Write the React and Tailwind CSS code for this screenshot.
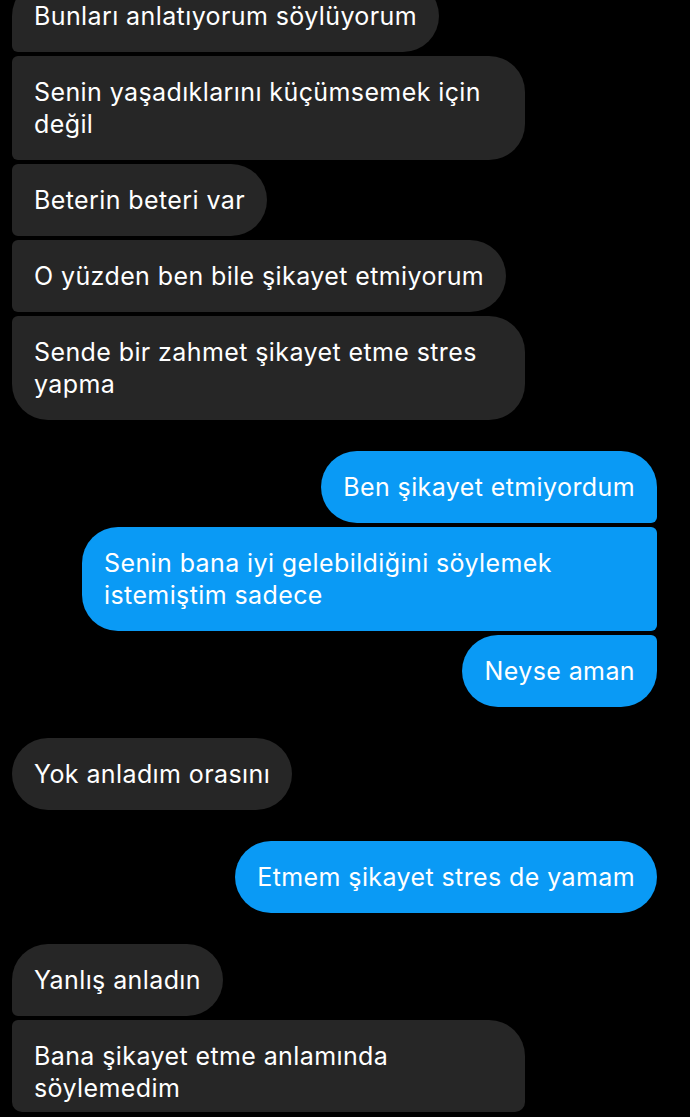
import React from "react";

const groups = [
  {
    side: "in",
    items: [
      { text: "Bunları anlatıyorum söylüyorum" },
      { text: "Senin yaşadıklarını küçümsemek için değil", w: "w-[513px]" },
      { text: "Beterin beteri var" },
      { text: "O yüzden ben bile şikayet etmiyorum" },
      { text: "Sende bir zahmet şikayet etme stres yapma", w: "w-[513px]" },
    ],
  },
  {
    side: "out",
    items: [
      { text: "Ben şikayet etmiyordum" },
      { text: "Senin bana iyi gelebildiğini söylemek istemiştim sadece", w: "w-[575px]" },
      { text: "Neyse aman" },
    ],
  },
  { side: "in", items: [{ text: "Yok anladım orasını" }] },
  { side: "out", items: [{ text: "Etmem şikayet stres de yamam" }] },
  {
    side: "in",
    items: [
      { text: "Yanlış anladın" },
      { text: "Bana şikayet etme anlamında söylemedim", w: "w-[513px]", last: true },
    ],
  },
];

// corner classes, written out in full so tailwind picks them up
const inCorners = {
  single: "rounded-tl-[36px] rounded-bl-[36px]",
  first: "rounded-tl-[36px] rounded-bl-[6px]",
  middle: "rounded-tl-[6px] rounded-bl-[6px]",
  last: "rounded-tl-[6px] rounded-bl-[36px]",
};
const outCorners = {
  single: "rounded-tr-[36px] rounded-br-[36px]",
  first: "rounded-tr-[36px] rounded-br-[6px]",
  middle: "rounded-tr-[6px] rounded-br-[6px]",
  last: "rounded-tr-[6px] rounded-br-[36px]",
};

function position(i, n) {
  if (n === 1) return "single";
  if (i === 0) return "first";
  if (i === n - 1) return "last";
  return "middle";
}

const Bubble = ({ side, text, w, pos, cut }) => {
  const isIn = side === "in";
  const corners = isIn
    ? `${inCorners[pos]} rounded-tr-[36px] rounded-br-[36px]`
    : `${outCorners[pos]} rounded-tl-[36px] rounded-bl-[36px]`;
  return (
    <div
      className={`${w || ""} ${corners} ${
        isIn ? "self-start bg-[#262626]" : "self-end bg-[#0a9af5]"
      } ${cut ? "h-[92px] overflow-hidden !rounded-bl-[10px] !rounded-br-[10px]" : ""} px-[22px] py-[20px] text-[25px] leading-[32px] tracking-[0.4px] text-white`}
    >
      {text}
    </div>
  );
};

export default function App() {
  return (
    <div
      className="h-[1117px] w-[690px] overflow-hidden bg-black"
      style={{ fontFamily: "Inter, 'Noto Sans', sans-serif" }}
    >
      <div className="mt-[-20px] flex flex-col gap-[31px] pl-3 pr-[33px]">
        {groups.map((g, gi) => (
          <div key={gi} className="flex flex-col gap-1">
            {g.items.map((m, i) => (
              <Bubble
                key={i}
                side={g.side}
                text={m.text}
                w={m.w}
                pos={position(i, g.items.length)}
                cut={m.last}
              />
            ))}
          </div>
        ))}
      </div>
    </div>
  );
}
